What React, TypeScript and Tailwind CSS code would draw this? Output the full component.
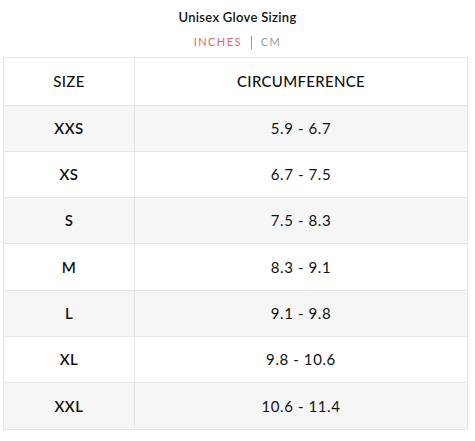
const ROWS = [
  ['XXS', '5.9 - 6.7'],
  ['XS', '6.7 - 7.5'],
  ['S', '7.5 - 8.3'],
  ['M', '8.3 - 9.1'],
  ['L', '9.1 - 9.8'],
  ['XL', '9.8 - 10.6'],
  ['XXL', '10.6 - 11.4'],
]

export default function App() {
  return (
    <div className="w-[475px] h-[441px] bg-white text-[#111] font-['Lato',sans-serif]">
      <div className="pt-[10px] text-center text-[13px] font-semibold leading-[14px] tracking-[0.3px]">
        Unisex Glove Sizing
      </div>
      <div className="mt-[11px] flex justify-center items-center text-[11px] leading-[14px] tracking-[1.4px]">
        <span className="text-[#e5656c]">INCHES</span>
        <span className="mx-[9px] h-[13px] w-px bg-[#999]" />
        <span className="text-[#9a9a9a]">CM</span>
      </div>
      <table className="mt-[8px] ml-[3px] w-[465px] border-collapse text-[15px]">
        <tbody>
          <tr className="h-[47.5px] bg-white">
            <td className="w-[131px] border border-[#e6e6e6] text-center font-medium tracking-[0.3px]">SIZE</td>
            <td className="border border-[#e6e6e6] text-center font-medium tracking-[0.3px]">CIRCUMFERENCE</td>
          </tr>
          {ROWS.map(([size, range], i) => (
            <tr key={size} className={`h-[46.3px] ${i % 2 === 0 ? 'bg-[#f6f6f6]' : 'bg-white'}`}>
              <td className="border border-[#e6e6e6] text-center font-semibold tracking-[0.5px]">{size}</td>
              <td className="border border-[#e6e6e6] text-center tracking-[0.6px]">{range}</td>
            </tr>
          ))}
        </tbody>
      </table>
    </div>
  )
}
